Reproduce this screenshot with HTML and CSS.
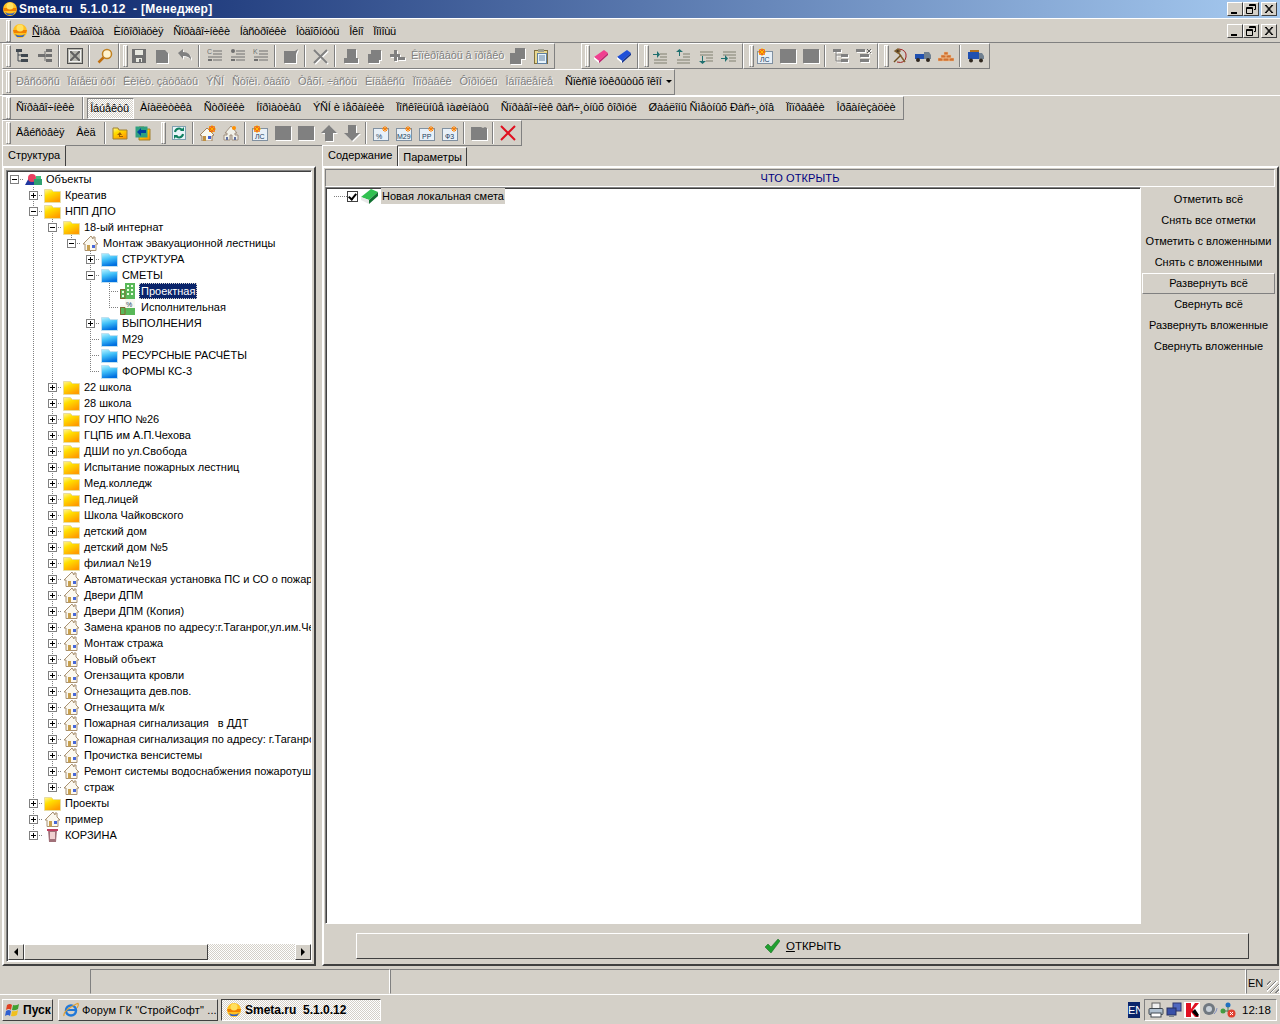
FILE: index.html
```html
<!DOCTYPE html>
<html lang="ru">
<head>
    <meta charset="UTF-8">
    <title>Smeta.ru 5.1.0.12 - [Менеджер]</title>
    <link rel="stylesheet" href="styles.css">
</head>
<body>

<!-- набор иконок -->
<svg class="defs" xmlns="http://www.w3.org/2000/svg">
    <defs>
        <linearGradient id="gy" x1="0" y1="0" x2="0.6" y2="1"><stop offset="0" stop-color="#fff59a"/><stop offset=".4" stop-color="#ffdf00"/><stop offset="1" stop-color="#ff9c00"/></linearGradient>
        <linearGradient id="gb" x1="0" y1="0" x2="0.3" y2="1"><stop offset="0" stop-color="#b8f4ff"/><stop offset=".5" stop-color="#40c0f8"/><stop offset="1" stop-color="#0070e0"/></linearGradient>
    </defs>
    <symbol id="sun" viewBox="0 0 16 16"><circle cx="8" cy="8" r="7" fill="#ffc020"/><path d="M1 7h14l-1 3H2z" fill="#f08000"/><path d="M3 11q5 3 10 0l-2 3H5z" fill="#3060c0"/><circle cx="8" cy="5" r="3.5" fill="#ffe060"/></symbol>
    <symbol id="tree-a" viewBox="0 0 16 16"><path d="M2 1h6v3H2zM7 6h7v3H7zM7 11h7v3H7z" fill="#404850"/><path d="M4 4v9h3M4 7h3" stroke="#404850" fill="none"/></symbol>
    <symbol id="tree-b" viewBox="0 0 16 16"><path d="M1 6h7v3H1zM9 1h6v3H9zM9 6h6v3H9zM9 11h6v3H9z" fill="#707070"/><path d="M8 3v10M8 8h2" stroke="#707070" fill="none"/></symbol>
    <symbol id="grid" viewBox="0 0 16 16"><rect x="0.5" y="0.5" width="15" height="15" fill="#b8b8b0" stroke="#505050"/><path d="M3 3l10 10M13 3L3 13" stroke="#606060" stroke-width="2"/><rect x="2.5" y="2.5" width="11" height="11" fill="none" stroke="#f0f0f0"/></symbol>
    <symbol id="lens" viewBox="0 0 16 16"><circle cx="10" cy="6" r="4.5" fill="#fff4d0" stroke="#c08020" stroke-width="1.5"/><path d="M6.5 9.5L1.5 14.5" stroke="#c07010" stroke-width="2.5"/></symbol>
    <symbol id="floppy" viewBox="0 0 16 16"><path d="M1 1h14v14H1z" fill="#707070"/><path d="M4 2h8v5H4zM5 10h6v4H5z" fill="#e8e8e0"/><path d="M8 11h2v3H8z" fill="#707070"/></symbol>
    <symbol id="gdoc" viewBox="0 0 16 16"><path d="M2 2h9l3 3v10H2z" fill="#808080"/></symbol>
    <symbol id="gdoc2" viewBox="0 0 16 16"><path d="M1 3h11l3-2-2 5v9H1z" fill="#808080"/></symbol>
    <symbol id="undo" viewBox="0 0 16 16"><path d="M1 5l5-4v3q8 0 8 8-2-4-8-4v3z" fill="#808080"/></symbol>
    <symbol id="list-lines" viewBox="0 0 16 16"><path d="M6 3h9M6 6h9M1 9h14M6 12h9" stroke="#707070"/><path d="M1 12h4" stroke="#707070" stroke-width="2"/></symbol>
    <symbol id="list-d" viewBox="0 0 16 16"><circle cx="3" cy="3" r="2" fill="#707070"/><path d="M6 3h9M6 6h9M1 9h14M6 12h9" stroke="#707070"/><path d="M1 12h4" stroke="#707070" stroke-width="2"/></symbol>
    <symbol id="gx" viewBox="0 0 16 16"><path d="M1 2l13 13M14 2L1 15" stroke="#808080" stroke-width="2"/></symbol>
    <symbol id="stamp" viewBox="0 0 16 16"><path d="M4 1h9v9h2v5H1v-5h3z" fill="#808080"/></symbol>
    <symbol id="stamp2" viewBox="0 0 16 16"><path d="M5 2h10v10h-2v3H2V6h3z" fill="#808080"/></symbol>
    <symbol id="gplus" viewBox="0 0 16 16"><path d="M5 2h3v4h3v3H8v4H5V9H1V6h4zM9 9h7v3H9z" fill="#808080"/></symbol>
    <symbol id="gcopy" viewBox="0 0 16 16"><path d="M5 0h10v11h-4v5H0V5h5z" fill="#808080"/></symbol>
    <symbol id="clip" viewBox="0 0 16 16"><rect x="1.5" y="2.5" width="13" height="13" fill="#e8d890" stroke="#807040"/><rect x="4.5" y="5.5" width="9" height="10" fill="#e8f4fc" stroke="#6080a0"/><rect x="5" y="1" width="6" height="3" fill="#a0a090"/><path d="M6 8h6M6 10h6M6 12h6" stroke="#6080a0"/></symbol>
    <symbol id="book-p" viewBox="0 0 16 16"><path d="M1 9L11 2l4 3-9 8z" fill="#f04090"/><path d="M1 9l5 4v2L1 11z" fill="#fff"/><path d="M6 13l9-8v2l-9 8z" fill="#c02070"/></symbol>
    <symbol id="book-b" viewBox="0 0 16 16"><path d="M1 9L11 2l4 3-9 8z" fill="#2050d8"/><path d="M1 9l5 4v2L1 11z" fill="#fff"/><path d="M6 13l9-8v2l-9 8z" fill="#103090"/></symbol>
    <symbol id="ind-a" viewBox="0 0 16 16"><path d="M8 6h7M8 9h7M2 12h13M2 15h13" stroke="#808070"/><path d="M1 6h4V3l3 3.5L5 10V7H1z" fill="#207070"/></symbol>
    <symbol id="ind-b" viewBox="0 0 16 16"><path d="M8 6h7M8 9h7M2 12h13M2 15h13" stroke="#808070"/><path d="M4 8V4H1l3.5-3L8 4H5v4z" fill="#207070"/></symbol>
    <symbol id="ind-c" viewBox="0 0 16 16"><path d="M2 4h13M2 7h13M8 10h7M8 13h7" stroke="#808070"/><path d="M4 8v5H1l3.5 3L8 13H5V8z" fill="#207070"/></symbol>
    <symbol id="ind-d" viewBox="0 0 16 16"><path d="M2 4h13M2 7h13M8 10h7M8 13h7" stroke="#808070"/><path d="M0 10h4V7l3 3.5L4 14v-3H0z" fill="#207070"/></symbol>
    <symbol id="note-new" viewBox="0 0 16 16"><rect x="0.5" y="3.5" width="15" height="12" fill="#e8f0f8" stroke="#8090a0"/><circle cx="5" cy="4" r="3" fill="#e02020"/><path d="M5 0v8M1 4h8M2 1l6 6M8 1L2 7" stroke="#ffc000"/></symbol>
    <symbol id="note-star" viewBox="0 0 16 16"><rect x="0.5" y="3.5" width="15" height="12" fill="#e8f0f8" stroke="#8090a0"/><path d="M12 1v6M9 4h6M10 2l4 4M14 2l-4 4" stroke="#ff8000"/></symbol>
    <symbol id="gsq" viewBox="0 0 16 16"><rect x="0" y="1" width="16" height="14" fill="#808080"/></symbol>
    <symbol id="tree-x" viewBox="0 0 16 16"><path d="M0 1h8v3H0zM8 6h7v3H8zM8 11h7v3H8z" fill="#808080"/><path d="M3 4v9h5M3 7h5" stroke="#808080" fill="none"/></symbol>
    <symbol id="tree-y" viewBox="0 0 16 16"><path d="M0 1h9v3H0zM4 6h9v3H4zM4 11h9v3H4z" fill="#808080"/><path d="M11 1l4 4M15 1l-4 4" stroke="#606060"/></symbol>
    <symbol id="sickle" viewBox="0 0 16 16"><path d="M7 1q8 1 7 8t-9 5" fill="none" stroke="#a02020"/><path d="M3 3l3-2 2 2-2 2zM6 4l7 10" stroke="#806030" stroke-width="1.5" fill="#403020"/><path d="M2 14L9 7" stroke="#705020" stroke-width="1.5"/></symbol>
    <symbol id="truck" viewBox="0 0 16 16"><path d="M0 6h9v5H0z" fill="#2050b0"/><path d="M9 4h5l2 3v4H9z" fill="#708090"/><circle cx="3" cy="12" r="2" fill="#302820"/><circle cx="13" cy="12" r="2" fill="#302820"/></symbol>
    <symbol id="bricks" viewBox="0 0 16 16"><path d="M6 4h4v3H6zM3 7h5v3H3zM8 7h5v3H8zM0 10h5v3H0zM5 10h6v3H5zM11 10h5v3h-5z" fill="#d07030" stroke="#f0c090" stroke-width=".5"/></symbol>
    <symbol id="truck2" viewBox="0 0 16 16"><path d="M2 2h9v2H2z" fill="#b07020"/><path d="M0 4h11v7H0z" fill="#2050b0"/><path d="M11 5h3l2 3v3h-5z" fill="#708090"/><circle cx="3" cy="12.5" r="2" fill="#302820"/><circle cx="13" cy="12.5" r="2" fill="#302820"/></symbol>
    <symbol id="f-up" viewBox="0 0 16 16"><path d="M1 3h5l1 2h8v9H1z" fill="url(#gy)" stroke="#a08030"/><path d="M8 7l-3 3h2v2h4v-1H8v-1h2z" fill="#a06000"/></symbol>
    <symbol id="f-back" viewBox="0 0 16 16"><path d="M4 2h5l1 2h5v11H4z" fill="url(#gy)" stroke="#a08030"/><rect x="0.5" y="1.5" width="12" height="11" fill="#30a080"/><path d="M2 7l4-4v2h5v3H6v3z" fill="#0040a0"/></symbol>
    <symbol id="refresh" viewBox="0 0 16 16"><rect x="1.5" y="1.5" width="13" height="13" fill="#e8f4f8" stroke="#80a0b0"/><path d="M4 7a4 4 0 017-2M12 9a4 4 0 01-7 2" stroke="#108060" stroke-width="2" fill="none"/><path d="M9 6h4V2zM7 10H3v4z" fill="#108060"/></symbol>
    <symbol id="house-n" viewBox="0 0 16 16"><path d="M7 3L0 10l2 1v5h10v-5l2-1z" fill="#f8f8f0" stroke="#a08060"/><path d="M3 11h3v5H3z" fill="#c09040"/><rect x="8" y="11" width="3" height="3" fill="#4060d0"/><circle cx="12" cy="4" r="3" fill="#e03020"/><path d="M12 0v8M8 4h8M9 1l6 6M15 1L9 7" stroke="#ffb000"/></symbol>
    <symbol id="houses-n" viewBox="0 0 16 16"><path d="M8 1L2 8h2v2H1v5h6v-5h2v5h6v-5h-3V8h2z" fill="#f0f0e8" stroke="#a09080"/><path d="M3 12h2v3H3zM11 12h2v3h-2z" fill="#6070a0"/><circle cx="11" cy="3" r="2" fill="#ff9000"/></symbol>
    <symbol id="g-up" viewBox="0 0 16 16"><path d="M8 0l8 8h-4v8H4V8H0z" fill="#808080"/></symbol>
    <symbol id="g-down" viewBox="0 0 16 16"><path d="M8 16l8-8h-4V0H4v8H0z" fill="#808080"/></symbol>
    <symbol id="g-book" viewBox="0 0 16 16"><path d="M0 2h10l2 1 2-1 2 1v12H0z" fill="#808080"/></symbol>
    <symbol id="red-x" viewBox="0 0 16 16"><path d="M1 1l14 14M15 1L1 15" stroke="#e01020" stroke-width="2"/></symbol>
    <symbol id="folder-y" viewBox="0 0 17 16"><path d="M0.5 2.5h7l2 2h7v11h-16z" fill="url(#gy)" stroke="#e8dca0"/></symbol>
    <symbol id="folder-b" viewBox="0 0 17 16"><path d="M0.5 2.5h7l2 2h7v11h-16z" fill="url(#gb)" stroke="#c0e0f0"/></symbol>
    <symbol id="house" viewBox="0 0 17 16"><path d="M9 1L1 9h2v6.5h11V9h2L13 6V2h-2v2z" fill="#fbf8ef" stroke="#a89070"/><path d="M5 10h3v5.5H5z" fill="#c8a050"/><rect x="10" y="10" width="3" height="3" fill="#4868d8"/></symbol>
    <symbol id="bld" viewBox="0 0 17 16"><path d="M5 0h10v16H0V6h5z" fill="#58b858"/><path d="M7 2h2v2H7zM11 2h2v2h-2zM7 6h2v2H7zM11 6h2v2h-2zM7 10h2v2H7zM11 10h2v2h-2zM2 8h2v2H2zM2 12h2v2H2z" fill="#e8ffe0"/><path d="M0.5 6.5h4.5v9h-4.5z" fill="none" stroke="#806830"/></symbol>
    <symbol id="bld-p" viewBox="0 0 17 16"><path d="M5 0h10v16H0V6h5z" fill="#f8f8f0"/><path d="M5 9h10v7H5zM0 8h5v8H0z" fill="#58b858"/><path d="M0.5 8.5h4.5v7h-4.5z" fill="none" stroke="#806830"/></symbol>
    <symbol id="objects" viewBox="0 0 17 16"><path d="M0 14L6 3l5 11z" fill="#2038a0"/><circle cx="7" cy="7" r="4" fill="#e84060"/><path d="M9 8h8v6H9z" fill="#30a070"/><path d="M11 5h5v3h-5z" fill="#40c080"/></symbol>
    <symbol id="trash" viewBox="0 0 17 16"><path d="M4 3h9l-1 12H5z" fill="#a07078"/><path d="M3 2h11v2H3z" fill="#c04060"/><path d="M6 5h5v7H6z" fill="#f0d0d0"/></symbol>
    <symbol id="book" viewBox="0 0 17 16"><path d="M0 9L10 1l7 3-9 8z" fill="#30c050"/><path d="M0 9l8 3v4L0 12z" fill="#e8e8e8"/><path d="M8 12l9-8v4l-9 8z" fill="#107030"/></symbol>
    <symbol id="check" viewBox="0 0 16 16"><path d="M1 9l3-3 3 3 7-8 2 2-9 12z" fill="#20a030" stroke="#106018" stroke-width=".5"/></symbol>
    <symbol id="flag" viewBox="0 0 16 16"><path d="M2 3q3-2 5 0l-1 5q-2-2-5 0z" fill="#e04020"/><path d="M8 3q3 1 6-1l-1 5q-3 2-6 1z" fill="#40a030"/><path d="M1 9q3-2 5 0l-1 5q-2-2-5 0z" fill="#3060d0"/><path d="M7 9q3 1 6-1l-1 5q-3 2-6 1z" fill="#f0c020"/></symbol>
    <symbol id="ie" viewBox="0 0 16 16"><circle cx="8" cy="8.5" r="5" fill="none" stroke="#2078d8" stroke-width="2.5"/><path d="M4 8h9" stroke="#2078d8" stroke-width="2"/><path d="M1 14q-1-4 7-9t7-3q1 1-1 4" fill="none" stroke="#e0a030" stroke-width="1.2"/></symbol>
    <symbol id="printer" viewBox="0 0 16 16"><rect x="4" y="1" width="8" height="6" fill="#f0f0f0" stroke="#606060"/><rect x="1" y="6.5" width="14" height="6" rx="1" fill="#b0c0d0" stroke="#404850"/><rect x="3" y="11" width="10" height="4" fill="#fff" stroke="#404850"/></symbol>
    <symbol id="monitors" viewBox="0 0 16 16"><rect x="7" y="1" width="8" height="8" fill="#5068c0" stroke="#303870"/><rect x="1" y="6" width="9" height="7" fill="#3850a8" stroke="#283060"/><path d="M3 13h5v2H3z" fill="#808890"/></symbol>
    <symbol id="kav" viewBox="0 0 16 16"><rect width="16" height="16" fill="#fff"/><path d="M2 1h5v6l4-6h4L9 8l6 7h-4L7 10v5H2z" fill="#e01020"/><path d="M8 10l3-3 4 6-2 2z" fill="#000"/></symbol>
    <symbol id="speaker" viewBox="0 0 16 16"><circle cx="7" cy="7" r="6" fill="#707880"/><circle cx="7" cy="7" r="3" fill="#c8d0d8"/><path d="M12 12q3-3 3-6" stroke="#8090c0" fill="none"/></symbol>
    <symbol id="net" viewBox="0 0 16 16"><circle cx="8" cy="3" r="2.5" fill="#2070c0"/><circle cx="3" cy="9" r="2.5" fill="#40a040"/><path d="M8 5v5M3 9h6" stroke="#508050"/><circle cx="11.5" cy="11.5" r="4" fill="#e04030"/><path d="M10 10l3 3M13 10l-3 3" stroke="#fff"/></symbol>
    <symbol id="w-min" viewBox="0 0 14 12"><path d="M3 9h6v2H3z" fill="#000"/></symbol>
    <symbol id="w-max" viewBox="0 0 14 12"><path d="M5.5 3V1.5h6v5H10M5 2.5h6M2.5 4.5h6v6h-6zM2.5 5.5h6" fill="none" stroke="#000"/></symbol>
    <symbol id="w-close" viewBox="0 0 14 12"><path d="M3 2l7 8M4 2l7 8M10 2l-7 8M11 2l-7 8" stroke="#000"/></symbol>
</svg>

<div class="title-bar">
    <svg class="ic-16"><use href="#sun"/></svg>
    <span class="title-text">Smeta.ru&nbsp; 5.1.0.12 &nbsp;- [Менеджер]</span>
    <div class="win-btns">
        <button class="win-btn"><svg><use href="#w-min"/></svg></button>
        <button class="win-btn"><svg><use href="#w-max"/></svg></button>
        <button class="win-btn gap"><svg><use href="#w-close"/></svg></button>
    </div>
</div>

<div class="menu-row">
    <div class="grip"></div>
    <svg class="ic-menu"><use href="#sun"/></svg>
    <span class="menu-item"><u>Ñ</u>ìåòà</span>
    <span class="menu-item">Ðàáîòà</span>
    <span class="menu-item">Èíôîðìàöèÿ</span>
    <span class="menu-item">Ñïðàâî÷íèêè</span>
    <span class="menu-item">Íàñòðîéêè</span>
    <span class="menu-item">Îòäîõíóòü</span>
    <span class="menu-item">Îêíî</span>
    <span class="menu-item">Ïîìîùü</span>
    <div class="win-btns">
        <button class="win-btn"><svg><use href="#w-min"/></svg></button>
        <button class="win-btn"><svg><use href="#w-max"/></svg></button>
        <button class="win-btn gap"><svg><use href="#w-close"/></svg></button>
    </div>
</div>

<!-- панели инструментов -->
<div class="tool-row">
    <div class="bar">
        <div class="grip"></div>
        <span class="tb"><svg class="ic"><use href="#tree-a"/></svg></span>
        <span class="tb"><svg class="ic"><use href="#tree-b"/></svg></span>
        <i class="sep"></i>
        <span class="tb"><svg class="ic"><use href="#grid"/></svg></span>
        <i class="sep"></i>
        <span class="tb"><svg class="ic"><use href="#lens"/></svg></span>
    </div>
    <div class="bar">
        <div class="grip"></div>
        <span class="tb"><svg class="ic"><use href="#floppy"/></svg></span>
        <span class="tb"><svg class="ic dis"><use href="#gdoc"/></svg></span>
        <span class="tb"><svg class="ic dis"><use href="#undo"/></svg></span>
        <i class="sep"></i>
        <span class="tb"><svg class="ic"><use href="#list-lines"/><text x="0" y="6" class="tiny gray">C</text></svg></span>
        <span class="tb"><svg class="ic"><use href="#list-d"/></svg></span>
        <span class="tb"><svg class="ic"><use href="#list-lines"/><text x="0" y="6" class="tiny gray">K</text></svg></span>
        <i class="sep"></i>
        <span class="tb"><svg class="ic dis"><use href="#gdoc2"/></svg></span>
        <i class="sep"></i>
        <span class="tb"><svg class="ic dis"><use href="#gx"/></svg></span>
        <i class="sep"></i>
        <span class="tb"><svg class="ic dis"><use href="#stamp"/></svg></span>
        <span class="tb"><svg class="ic dis"><use href="#stamp2"/></svg></span>
        <span class="tb"><svg class="ic dis"><use href="#gplus"/></svg></span>
        <span class="tt off copy">Êîïèðîâàòü â ïðîåêò</span>
        <span class="tb"><svg class="ic dis"><use href="#gcopy"/></svg></span>
        <span class="tb"><svg class="ic"><use href="#clip"/></svg></span>
    </div>
    <div class="bar far">
        <div class="grip"></div>
        <span class="tb"><svg class="ic"><use href="#book-p"/></svg></span>
        <span class="tb"><svg class="ic"><use href="#book-b"/></svg></span>
    </div>
    <div class="bar right">
        <div class="grip"></div>
        <span class="tb"><svg class="ic"><use href="#ind-a"/></svg></span>
        <span class="tb"><svg class="ic"><use href="#ind-b"/></svg></span>
        <span class="tb"><svg class="ic"><use href="#ind-c"/></svg></span>
        <span class="tb"><svg class="ic"><use href="#ind-d"/></svg></span>
    </div>
    <div class="bar right">
        <div class="grip"></div>
        <span class="tb"><svg class="ic"><use href="#note-new"/><text x="3" y="14" class="tiny">ЛС</text></svg></span>
        <span class="tb"><svg class="ic dis"><use href="#gsq"/></svg></span>
        <span class="tb"><svg class="ic dis"><use href="#gsq"/></svg></span>
        <i class="sep"></i>
        <span class="tb"><svg class="ic dis"><use href="#tree-x"/></svg></span>
        <span class="tb"><svg class="ic dis"><use href="#tree-y"/></svg></span>
    </div>
    <div class="bar right">
        <div class="grip"></div>
        <span class="tb"><svg class="ic"><use href="#sickle"/></svg></span>
        <span class="tb"><svg class="ic"><use href="#truck"/></svg></span>
        <span class="tb"><svg class="ic"><use href="#bricks"/></svg></span>
        <i class="sep"></i>
        <span class="tb"><svg class="ic"><use href="#truck2"/></svg></span>
    </div>
</div>

<div class="tool-row">
    <div class="bar narrow">
        <div class="grip"></div>
        <span class="tt off">Ðåñóðñû</span>
        <span class="tt off">Ïàíåëü òðí</span>
        <span class="tt off">Ëèìèò. çàòðàòû</span>
        <span class="tt off">ÝÑÍ</span>
        <span class="tt off">Ñòîèì. ðàáîò</span>
        <span class="tt off">Òåõí. ÷àñòü</span>
        <span class="tt off">Èíäåêñû</span>
        <span class="tt off">Ïîïðàâêè</span>
        <span class="tt off">Ôîðìóëû</span>
        <span class="tt off">Îáíîâëåíèå</span>
        <span class="tt">Ñïèñîê îòêðûòûõ îêîí <i class="caret"></i></span>
    </div>
</div>

<div class="tool-row row-lit">
    <div class="bar">
        <div class="grip"></div>
        <span class="tt">Ñïðàâî÷íèêè</span>
        <i class="sep"></i>
        <span class="tt checked">Îáúåêòû</span>
        <span class="tt">Àíàëèòèêà</span>
        <span class="tt">Ñòðîéêè</span>
        <span class="tt">Íîðìàòèâû</span>
        <span class="tt">ÝÑÍ è ìåõàíèêè</span>
        <span class="tt">Ïîñêîëüíûå ìàøèíàòû</span>
        <span class="tt">Ñïðàâî÷íèê ðàñ÷¸òíûõ ôîðìóë</span>
        <span class="tt">Øàáëîíû Ñìåòíûõ Ðàñ÷¸òîâ</span>
        <span class="tt">Ïîïðàâêè</span>
        <span class="tt">Îðãàíèçàöèè</span>
    </div>
</div>

<div class="tool-row row-four">
    <div class="bar">
        <div class="grip"></div>
        <span class="tt">Äåéñòâèÿ</span>
        <span class="tt">Âèä</span>
        <i class="sep"></i>
        <span class="tb"><svg class="ic"><use href="#f-up"/></svg></span>
        <span class="tb"><svg class="ic"><use href="#f-back"/></svg></span>
        <div class="grip wide"></div>
        <span class="tb"><svg class="ic"><use href="#refresh"/></svg></span>
        <i class="sep"></i>
        <span class="tb"><svg class="ic"><use href="#house-n"/></svg></span>
        <span class="tb"><svg class="ic"><use href="#houses-n"/></svg></span>
        <i class="sep"></i>
        <span class="tb"><svg class="ic"><use href="#note-new"/><text x="3" y="14" class="tiny">ЛС</text></svg></span>
        <span class="tb"><svg class="ic dis"><use href="#gsq"/></svg></span>
        <span class="tb"><svg class="ic dis"><use href="#gsq"/></svg></span>
        <span class="tb"><svg class="ic dis"><use href="#g-up"/></svg></span>
        <span class="tb"><svg class="ic dis"><use href="#g-down"/></svg></span>
        <i class="sep"></i>
        <span class="tb"><svg class="ic"><use href="#note-star"/><text x="3" y="14" class="tiny">%</text></svg></span>
        <span class="tb"><svg class="ic"><use href="#note-star"/><text x="1" y="14" class="tiny">М29</text></svg></span>
        <span class="tb"><svg class="ic"><use href="#note-star"/><text x="3" y="14" class="tiny">РР</text></svg></span>
        <span class="tb"><svg class="ic"><use href="#note-star"/><text x="3" y="14" class="tiny">Ф3</text></svg></span>
        <i class="sep"></i>
        <span class="tb"><svg class="ic dis"><use href="#g-book"/></svg></span>
        <i class="sep"></i>
        <span class="tb"><svg class="ic"><use href="#red-x"/></svg></span>
    </div>
</div>

<div class="main">
    <!-- левая панель: дерево объектов -->
    <div class="pane pane-left">
        <div class="tabs"><span class="tab active">Структура</span></div>
        <div class="frame">
            <div class="sunken tree-box">
                <div class="tree">
                    <div class="row"><i class="c h"><b class="box minus"></b></i><svg class="ic-tree"><use href="#objects"/></svg><span>Объекты</span></div>
                    <div class="row"><i class="c"></i><i class="c j"><b class="box plus"></b></i><svg class="ic-tree"><use href="#folder-y"/></svg><span>Креатив</span></div>
                    <div class="row"><i class="c"></i><i class="c j"><b class="box minus"></b></i><svg class="ic-tree"><use href="#folder-y"/></svg><span>НПП ДПО</span></div>
                    <div class="row"><i class="c"></i><i class="c v"></i><i class="c j"><b class="box minus"></b></i><svg class="ic-tree"><use href="#folder-y"/></svg><span>18-ый интернат</span></div>
                    <div class="row"><i class="c"></i><i class="c v"></i><i class="c v"></i><i class="c n"><b class="box minus"></b></i><svg class="ic-tree"><use href="#house"/></svg><span>Монтаж эвакуационной лестницы</span></div>
                    <div class="row"><i class="c"></i><i class="c v"></i><i class="c v"></i><i class="c"></i><i class="c j"><b class="box plus"></b></i><svg class="ic-tree"><use href="#folder-b"/></svg><span>СТРУКТУРА</span></div>
                    <div class="row"><i class="c"></i><i class="c v"></i><i class="c v"></i><i class="c"></i><i class="c j"><b class="box minus"></b></i><svg class="ic-tree"><use href="#folder-b"/></svg><span>СМЕТЫ</span></div>
                    <div class="row"><i class="c"></i><i class="c v"></i><i class="c v"></i><i class="c"></i><i class="c v"></i><i class="c j"></i><svg class="ic-tree"><use href="#bld"/></svg><span class="selected">Проектная</span></div>
                    <div class="row"><i class="c"></i><i class="c v"></i><i class="c v"></i><i class="c"></i><i class="c v"></i><i class="c n"></i><svg class="ic-tree"><use href="#bld-p"/><text x="6" y="8" class="tiny">%</text></svg><span>Исполнительная</span></div>
                    <div class="row"><i class="c"></i><i class="c v"></i><i class="c v"></i><i class="c"></i><i class="c j"><b class="box plus"></b></i><svg class="ic-tree"><use href="#folder-b"/></svg><span>ВЫПОЛНЕНИЯ</span></div>
                    <div class="row"><i class="c"></i><i class="c v"></i><i class="c v"></i><i class="c"></i><i class="c j"></i><svg class="ic-tree"><use href="#folder-b"/></svg><span>М29</span></div>
                    <div class="row"><i class="c"></i><i class="c v"></i><i class="c v"></i><i class="c"></i><i class="c j"></i><svg class="ic-tree"><use href="#folder-b"/></svg><span>РЕСУРСНЫЕ РАСЧЁТЫ</span></div>
                    <div class="row"><i class="c"></i><i class="c v"></i><i class="c v"></i><i class="c"></i><i class="c n"></i><svg class="ic-tree"><use href="#folder-b"/></svg><span>ФОРМЫ КС-3</span></div>
                    <div class="row"><i class="c"></i><i class="c v"></i><i class="c j"><b class="box plus"></b></i><svg class="ic-tree"><use href="#folder-y"/></svg><span>22 школа</span></div>
                    <div class="row"><i class="c"></i><i class="c v"></i><i class="c j"><b class="box plus"></b></i><svg class="ic-tree"><use href="#folder-y"/></svg><span>28 школа</span></div>
                    <div class="row"><i class="c"></i><i class="c v"></i><i class="c j"><b class="box plus"></b></i><svg class="ic-tree"><use href="#folder-y"/></svg><span>ГОУ НПО №26</span></div>
                    <div class="row"><i class="c"></i><i class="c v"></i><i class="c j"><b class="box plus"></b></i><svg class="ic-tree"><use href="#folder-y"/></svg><span>ГЦПБ им А.П.Чехова</span></div>
                    <div class="row"><i class="c"></i><i class="c v"></i><i class="c j"><b class="box plus"></b></i><svg class="ic-tree"><use href="#folder-y"/></svg><span>ДШИ по ул.Свобода</span></div>
                    <div class="row"><i class="c"></i><i class="c v"></i><i class="c j"><b class="box plus"></b></i><svg class="ic-tree"><use href="#folder-y"/></svg><span>Испытание пожарных лестниц</span></div>
                    <div class="row"><i class="c"></i><i class="c v"></i><i class="c j"><b class="box plus"></b></i><svg class="ic-tree"><use href="#folder-y"/></svg><span>Мед.колледж</span></div>
                    <div class="row"><i class="c"></i><i class="c v"></i><i class="c j"><b class="box plus"></b></i><svg class="ic-tree"><use href="#folder-y"/></svg><span>Пед.лицей</span></div>
                    <div class="row"><i class="c"></i><i class="c v"></i><i class="c j"><b class="box plus"></b></i><svg class="ic-tree"><use href="#folder-y"/></svg><span>Школа Чайковского</span></div>
                    <div class="row"><i class="c"></i><i class="c v"></i><i class="c j"><b class="box plus"></b></i><svg class="ic-tree"><use href="#folder-y"/></svg><span>детский дом</span></div>
                    <div class="row"><i class="c"></i><i class="c v"></i><i class="c j"><b class="box plus"></b></i><svg class="ic-tree"><use href="#folder-y"/></svg><span>детский дом №5</span></div>
                    <div class="row"><i class="c"></i><i class="c v"></i><i class="c j"><b class="box plus"></b></i><svg class="ic-tree"><use href="#folder-y"/></svg><span>филиал №19</span></div>
                    <div class="row"><i class="c"></i><i class="c v"></i><i class="c j"><b class="box plus"></b></i><svg class="ic-tree"><use href="#house"/></svg><span>Автоматическая установка ПС и СО о пожаре</span></div>
                    <div class="row"><i class="c"></i><i class="c v"></i><i class="c j"><b class="box plus"></b></i><svg class="ic-tree"><use href="#house"/></svg><span>Двери ДПМ</span></div>
                    <div class="row"><i class="c"></i><i class="c v"></i><i class="c j"><b class="box plus"></b></i><svg class="ic-tree"><use href="#house"/></svg><span>Двери ДПМ (Копия)</span></div>
                    <div class="row"><i class="c"></i><i class="c v"></i><i class="c j"><b class="box plus"></b></i><svg class="ic-tree"><use href="#house"/></svg><span>Замена кранов по адресу:г.Таганрог,ул.им.Чехова</span></div>
                    <div class="row"><i class="c"></i><i class="c v"></i><i class="c j"><b class="box plus"></b></i><svg class="ic-tree"><use href="#house"/></svg><span>Монтаж стража</span></div>
                    <div class="row"><i class="c"></i><i class="c v"></i><i class="c j"><b class="box plus"></b></i><svg class="ic-tree"><use href="#house"/></svg><span>Новый объект</span></div>
                    <div class="row"><i class="c"></i><i class="c v"></i><i class="c j"><b class="box plus"></b></i><svg class="ic-tree"><use href="#house"/></svg><span>Огензащита кровли</span></div>
                    <div class="row"><i class="c"></i><i class="c v"></i><i class="c j"><b class="box plus"></b></i><svg class="ic-tree"><use href="#house"/></svg><span>Огнезащита дев.пов.</span></div>
                    <div class="row"><i class="c"></i><i class="c v"></i><i class="c j"><b class="box plus"></b></i><svg class="ic-tree"><use href="#house"/></svg><span>Огнезащита м/к</span></div>
                    <div class="row"><i class="c"></i><i class="c v"></i><i class="c j"><b class="box plus"></b></i><svg class="ic-tree"><use href="#house"/></svg><span>Пожарная сигнализация &nbsp; в ДДТ</span></div>
                    <div class="row"><i class="c"></i><i class="c v"></i><i class="c j"><b class="box plus"></b></i><svg class="ic-tree"><use href="#house"/></svg><span>Пожарная сигнализация по адресу: г.Таганрог</span></div>
                    <div class="row"><i class="c"></i><i class="c v"></i><i class="c j"><b class="box plus"></b></i><svg class="ic-tree"><use href="#house"/></svg><span>Прочистка венсистемы</span></div>
                    <div class="row"><i class="c"></i><i class="c v"></i><i class="c j"><b class="box plus"></b></i><svg class="ic-tree"><use href="#house"/></svg><span>Ремонт системы водоснабжения пожаротушения</span></div>
                    <div class="row"><i class="c"></i><i class="c v"></i><i class="c n"><b class="box plus"></b></i><svg class="ic-tree"><use href="#house"/></svg><span>страж</span></div>
                    <div class="row"><i class="c"></i><i class="c j"><b class="box plus"></b></i><svg class="ic-tree"><use href="#folder-y"/></svg><span>Проекты</span></div>
                    <div class="row"><i class="c"></i><i class="c j"><b class="box plus"></b></i><svg class="ic-tree"><use href="#house"/></svg><span>пример</span></div>
                    <div class="row"><i class="c"></i><i class="c n"><b class="box plus"></b></i><svg class="ic-tree"><use href="#trash"/></svg><span>КОРЗИНА</span></div>
                </div>
                <div class="hscroll">
                    <span class="sb-btn"><i class="arrow-left"></i></span>
                    <span class="sb-thumb"></span>
                    <span class="sb-track"></span>
                    <span class="sb-btn"><i class="arrow-right"></i></span>
                </div>
            </div>
        </div>
    </div>

    <!-- правая панель: что открыть -->
    <div class="pane pane-right">
        <div class="tabs">
            <span class="tab active">Содержание</span>
            <span class="tab">Параметры</span>
        </div>
        <div class="frame frame-right">
            <div class="open-title">ЧТО ОТКРЫТЬ</div>
            <div class="open-body">
                <div class="sunken open-list">
                    <div class="open-row">
                        <i class="dots"></i>
                        <b class="checkbox"></b>
                        <svg class="ic-tree"><use href="#book"/></svg>
                        <span class="open-name">Новая локальная смета</span>
                    </div>
                </div>
                <div class="side">
                    <span class="side-btn">Отметить всё</span>
                    <span class="side-btn">Снять все отметки</span>
                    <span class="side-btn">Отметить с вложенными</span>
                    <span class="side-btn">Снять с вложенными</span>
                    <span class="side-btn hot">Развернуть всё</span>
                    <span class="side-btn">Свернуть всё</span>
                    <span class="side-btn">Развернуть вложенные</span>
                    <span class="side-btn">Свернуть вложенные</span>
                </div>
            </div>
            <div class="open-foot">
                <button class="open-btn"><svg class="ic"><use href="#check"/></svg><span><u>О</u>ТКРЫТЬ</span></button>
            </div>
        </div>
    </div>
</div>

<div class="status">
    <span class="st st-a"></span>
    <span class="st st-b"></span>
    <span class="st st-c"></span>
    <span class="st st-d">EN<i class="size-grip"></i></span>
</div>

<div class="taskbar">
    <button class="start"><svg class="ic"><use href="#flag"/></svg>Пуск</button>
    <span class="task task-ie"><svg class="ic"><use href="#ie"/></svg>Форум ГК "СтройСофт" ...</span>
    <span class="task task-on"><svg class="ic"><use href="#sun"/></svg>Smeta.ru&nbsp; 5.1.0.12</span>
    <span class="lang">EN</span>
    <div class="tray">
        <svg class="ic"><use href="#printer"/></svg>
        <svg class="ic"><use href="#monitors"/></svg>
        <svg class="ic"><use href="#kav"/></svg>
        <svg class="ic"><use href="#speaker"/></svg>
        <svg class="ic"><use href="#net"/></svg>
        <span class="clock">12:18</span>
    </div>
</div>

</body>
</html>
```

FILE: styles.css
```css
html, body {
    margin: 0;
    padding: 0;
}

body {
    width: 1280px;
    height: 1024px;
    overflow: hidden;
    display: flex;
    flex-direction: column;
    background-color: #d4d0c8;
    color: #000000;
    font-family: "Liberation Sans", Arial, sans-serif;
    font-size: 11px;
    line-height: 16px;
}

.defs {
    position: absolute;
    width: 0;
    height: 0;
}

.tiny {
    font-family: "Liberation Sans", Arial, sans-serif;
    font-size: 7px;
    fill: #204060;
}

.tiny.gray {
    fill: #707070;
}

svg {
    flex: none;
}

/* Заголовок окна */
.title-bar {
    height: 18px;
    display: flex;
    align-items: center;
    padding-left: 2px;
    margin-bottom: 1px;
    background: linear-gradient(to right, #0a246a, #a6caf0);
    box-shadow: 0 1px 0 #ffffff;
}

.ic-16 {
    width: 16px;
    height: 16px;
}

.title-text {
    margin-left: 1px;
    color: #ffffff;
    font-weight: bold;
    font-size: 12px;
    letter-spacing: 0.3px;
    white-space: nowrap;
}

.win-btns {
    margin-left: auto;
    display: flex;
    margin-right: 3px;
}

.win-btn {
    width: 16px;
    height: 14px;
    padding: 0;
    background-color: #d4d0c8;
    border: 1px solid;
    border-color: #ffffff #404040 #404040 #ffffff;
    display: flex;
}

.win-btn svg {
    width: 14px;
    height: 12px;
}

.win-btn.gap {
    margin-left: 2px;
}

/* Меню */
.menu-row {
    height: 23px;
    display: flex;
    align-items: center;
    padding-left: 3px;
    border-bottom: 1px solid #808080;
}

.grip {
    flex: none;
    width: 1px;
    height: 20px;
    margin: 0 1px 0 3px;
    border: 1px solid;
    border-color: #ffffff #808080 #808080 #ffffff;
}

.grip::after {
    content: "";
    display: block;
    width: 1px;
    height: 20px;
    margin-left: 1px;
    border: 1px solid;
    border-color: #ffffff #808080 #808080 #ffffff;
    margin-top: -1px;
}

.grip.wide {
    margin-left: 7px;
    margin-right: 3px;
}

.ic-menu {
    width: 16px;
    height: 16px;
    margin: 0 0 0 2px;
}

.menu-item {
    padding: 0 5px;
    letter-spacing: -0.3px;
    white-space: nowrap;
}

.menu-item:first-of-type {
    padding-left: 4px;
}

/* Панели инструментов */
.tool-row {
    height: 26px;
    display: flex;
    padding-left: 2px;
}

.row-lit {
    height: 24px;
    border-top: 1px solid #ffffff;
}

.bar {
    display: flex;
    align-items: center;
    height: 100%;
    box-sizing: border-box;
    padding-right: 2px;
    border: 1px solid;
    border-color: #ffffff #808080 #808080 #ffffff;
}

.bar.far {
    margin-left: 26px;
}

.bar.right {
    padding-left: 2px;
}

.tb {
    flex: none;
    width: 23px;
    height: 22px;
    display: flex;
    align-items: center;
    justify-content: center;
}

.ic {
    width: 16px;
    height: 16px;
}

.dis {
    filter: drop-shadow(1px 1px 0 #ffffff);
}

.sep {
    flex: none;
    width: 1px;
    height: 22px;
    margin: 0 3px 0 2px;
    background-color: #808080;
    border-right: 1px solid #ffffff;
}

.row-four .sep {
    margin: 0 2px;
}

.row-four .tt + .sep {
    margin-left: 3px;
}

.tt {
    flex: none;
    height: 21px;
    line-height: 19px;
    padding: 0 6px;
    letter-spacing: -0.15px;
    white-space: nowrap;
    box-sizing: border-box;
}

.tt.off {
    color: #808080;
    text-shadow: 1px 1px 0 #ffffff;
}

.tt.copy {
    margin-left: 1px;
    padding: 0 2px;
}

.narrow .tt {
    padding: 0 4px;
}

.narrow .grip {
    margin-right: 3px;
}

.narrow .tt:last-child {
    margin-left: 4px;
    padding-right: 0;
}

.tt.checked {
    padding: 0 4px 0 2px;
    border: 1px solid;
    border-color: #808080 #ffffff #ffffff #808080;
    background: repeating-conic-gradient(#ffffff 0 25%, #d4d0c8 0 50%) 0 0 / 2px 2px;
}

.caret {
    display: inline-block;
    width: 0;
    height: 0;
    margin-left: 1px;
    vertical-align: 2px;
    border-left: 3px solid transparent;
    border-right: 3px solid transparent;
    border-top: 3px solid #000000;
}

/* Основная часть */
.main {
    flex: 1;
    display: flex;
    min-height: 0;
}

.pane {
    display: flex;
    flex-direction: column;
    margin-bottom: 2px;
}

.pane-left {
    width: 314px;
    margin-left: 2px;
    flex: none;
}

.pane-right {
    flex: 1;
    margin-left: 6px;
    margin-right: 1px;
}

.tabs {
    height: 20px;
    display: flex;
    padding-left: 0;
    align-items: flex-end;
}

.tab {
    height: 18px;
    line-height: 18px;
    padding: 0 4px 0 4px;
    border: 1px solid;
    border-bottom: 0;
    border-color: #ffffff #404040 #ffffff #ffffff;
    white-space: nowrap;
}

.tab.active {
    height: 20px;
    line-height: 19px;
    padding: 0 5px;
}

.frame {
    flex: 1;
    min-height: 0;
    display: flex;
    flex-direction: column;
    border: 2px solid;
    border-color: #ffffff #404040 #404040 #ffffff;
    padding: 2px;
}

.sunken {
    border: 1px solid;
    border-color: #808080 #ffffff #ffffff #808080;
    box-shadow: inset 1px 1px 0 #404040;
    background-color: #ffffff;
}

/* Дерево */
.tree-box {
    flex: 1;
    min-height: 0;
    display: flex;
    flex-direction: column;
    padding: 0 0 1px 1px;
}

.tree {
    flex: 1;
    min-height: 0;
    overflow: hidden;
    margin-left: -3px;
}

.row {
    height: 16px;
    display: flex;
    align-items: center;
    white-space: nowrap;
}

.row span {
    margin-left: 2px;
    padding: 0 2px;
    flex: none;
}

.c {
    flex: none;
    width: 19px;
    height: 16px;
    display: flex;
    align-items: center;
    justify-content: center;
}

.v {
    background: repeating-linear-gradient(to bottom, #808080 0 1px, transparent 1px 2px) 9px 0 / 1px 100% no-repeat;
}

.h {
    background: repeating-linear-gradient(to right, #808080 0 1px, transparent 1px 2px) 9px 8px / 10px 1px no-repeat;
}

.j {
    background:
        repeating-linear-gradient(to bottom, #808080 0 1px, transparent 1px 2px) 9px 0 / 1px 100% no-repeat,
        repeating-linear-gradient(to right, #808080 0 1px, transparent 1px 2px) 9px 8px / 10px 1px no-repeat;
}

.n {
    background:
        repeating-linear-gradient(to bottom, #808080 0 1px, transparent 1px 2px) 9px 0 / 1px 9px no-repeat,
        repeating-linear-gradient(to right, #808080 0 1px, transparent 1px 2px) 9px 8px / 10px 1px no-repeat;
}

.box {
    width: 9px;
    height: 9px;
    box-sizing: border-box;
    border: 1px solid #808080;
    background-color: #ffffff;
}

.minus {
    background: linear-gradient(#000000, #000000) center / 5px 1px no-repeat, #ffffff;
}

.plus {
    background:
        linear-gradient(#000000, #000000) center / 5px 1px no-repeat,
        linear-gradient(#000000, #000000) center / 1px 5px no-repeat,
        #ffffff;
}

.ic-tree {
    width: 17px;
    height: 16px;
    margin-left: 1px;
}

.row .selected {
    background-color: #0a246a;
    color: #ffffff;
    outline: 1px dotted #d4d0c8;
    outline-offset: -1px;
}

/* Полоса прокрутки */
.hscroll {
    flex: none;
    height: 16px;
    display: flex;
}

.sb-btn, .sb-thumb {
    height: 16px;
    box-sizing: border-box;
    background-color: #d4d0c8;
    border: 1px solid;
    border-color: #ffffff #404040 #404040 #ffffff;
}

.sb-btn {
    flex: none;
    width: 16px;
    display: flex;
    align-items: center;
    justify-content: center;
}

.sb-thumb {
    flex: none;
    width: 184px;
}

.sb-track {
    flex: 1;
    background: repeating-conic-gradient(#ffffff 0 25%, #d4d0c8 0 50%) 0 0 / 2px 2px;
}

.arrow-left {
    border-top: 4px solid transparent;
    border-bottom: 4px solid transparent;
    border-right: 4px solid #000000;
}

.arrow-right {
    border-top: 4px solid transparent;
    border-bottom: 4px solid transparent;
    border-left: 4px solid #000000;
}

/* Правая панель */
.frame-right {
    padding: 1px 2px 0 1px;
}

.open-title {
    flex: none;
    height: 16px;
    line-height: 16px;
    text-align: center;
    color: #000080;
    font-size: 11px;
    letter-spacing: 0.1px;
    border: 1px solid;
    border-color: #808080 #ffffff #ffffff #808080;
}

.open-body {
    flex: 1;
    min-height: 0;
    display: flex;
}

.open-list {
    flex: 1;
}

.open-row {
    height: 16px;
    display: flex;
    align-items: center;
    padding-left: 8px;
}

.dots {
    width: 13px;
    height: 1px;
    background: repeating-linear-gradient(to right, #808080 0 1px, transparent 1px 2px);
}

.checkbox {
    position: relative;
    flex: none;
    width: 11px;
    height: 11px;
    box-sizing: border-box;
    margin-right: 2px;
    border: 1px solid #404040;
    background-color: #ffffff;
}

.checkbox::after {
    content: "";
    position: absolute;
    left: 2px;
    top: 0;
    width: 3px;
    height: 6px;
    border: solid #000000;
    border-width: 0 2px 2px 0;
    transform: rotate(40deg);
}

.open-name {
    margin-left: 3px;
    padding: 0 1px;
    background-color: #d4d0c8;
    white-space: nowrap;
}

.side {
    flex: none;
    width: 133px;
    display: flex;
    flex-direction: column;
    padding: 2px 0 0 1px;
}

.side-btn {
    height: 21px;
    line-height: 21px;
    box-sizing: border-box;
    text-align: center;
    white-space: nowrap;
}

.side-btn.hot {
    line-height: 19px;
    border: 1px solid;
    border-color: #ffffff #808080 #808080 #ffffff;
}

.open-foot {
    flex: none;
    height: 40px;
    padding: 9px 26px 0 31px;
    box-sizing: border-box;
}

.open-btn {
    width: 100%;
    height: 26px;
    padding: 0;
    background-color: #d4d0c8;
    border: 1px solid;
    border-color: #ffffff #404040 #404040 #ffffff;
    font: inherit;
    font-size: 11.5px;
    display: flex;
    align-items: center;
    justify-content: center;
    gap: 6px;
}

/* Строка состояния */
.status {
    flex: none;
    height: 25px;
    display: flex;
    border-top: 1px solid #d4d0c8;
}

.st {
    box-sizing: border-box;
    height: 25px;
    border: 1px solid;
    border-color: #808080 #ffffff transparent #808080;
    position: relative;
}

.st-a {
    width: 90px;
    border-left: 0;
    border-top: 0;
    border-right: 0;
}

.st-b {
    width: 300px;
}

.st-c {
    width: 856px;
}

.st-d {
    flex: 1;
    line-height: 26px;
    padding-left: 1px;
}

.size-grip {
    position: absolute;
    right: 0;
    bottom: 0;
    width: 12px;
    height: 12px;
    background: repeating-linear-gradient(135deg, transparent 0 2px, #808080 2px 3px, #ffffff 3px 4px);
}

/* Панель задач */
.taskbar {
    flex: none;
    height: 30px;
    display: flex;
    align-items: center;
    border-top: 1px solid #ffffff;
    box-sizing: border-box;
}

.start {
    width: 51px;
    height: 22px;
    margin: 0 5px 0 2px;
    padding: 0 0 0 2px;
    display: flex;
    align-items: center;
    gap: 2px;
    background-color: #d4d0c8;
    border: 1px solid;
    border-color: #ffffff #404040 #404040 #ffffff;
    font: bold 12px "Liberation Sans", Arial, sans-serif;
}

.task {
    flex: none;
    box-sizing: border-box;
    height: 22px;
    display: flex;
    align-items: center;
    gap: 3px;
    padding-left: 4px;
    white-space: nowrap;
    border: 1px solid;
}

.task-ie {
    width: 160px;
    margin-right: 3px;
    border-color: #ffffff #404040 #404040 #ffffff;
    letter-spacing: 0.15px;
}

.task-on {
    width: 160px;
    border-color: #404040 #ffffff #ffffff #404040;
    background: repeating-conic-gradient(#ffffff 0 25%, #d4d0c8 0 50%) 0 0 / 2px 2px;
    font: bold 12px "Liberation Sans", Arial, sans-serif;
}

.lang {
    margin-left: auto;
    width: 12px;
    height: 16px;
    overflow: hidden;
    line-height: 16px;
    background-color: #0a246a;
    color: #ffffff;
    white-space: nowrap;
}

.tray {
    flex: none;
    box-sizing: border-box;
    width: 133px;
    height: 22px;
    margin: 0 3px 0 4px;
    padding-left: 3px;
    display: flex;
    align-items: center;
    gap: 2px;
    border: 1px solid;
    border-color: #808080 #ffffff #ffffff #808080;
}

.clock {
    margin-left: 4px;
    font-size: 11.5px;
}
```
